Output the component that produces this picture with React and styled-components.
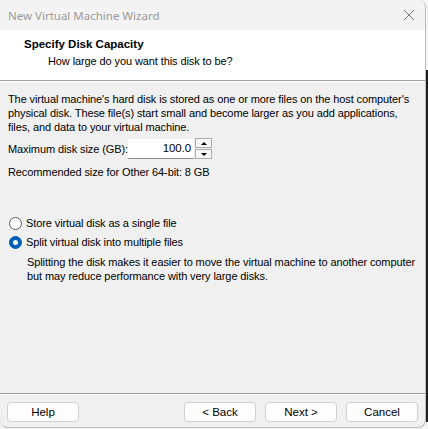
import styled, { createGlobalStyle } from "styled-components"

const GlobalStyle = createGlobalStyle`
  html, body {
    margin: 0;
    padding: 0;
    background: #f4f4f4;
  }
  body {
    font-family: "Liberation Sans", Arial, sans-serif;
    font-size: 11px;
    letter-spacing: -0.1px;
    color: #000;
  }
`

const Desktop = styled.div`
  display: flex;
  width: 428px;
  height: 429px;
  overflow: hidden;
`

const Window = styled.div`
  width: 425px;
  height: 427px;
  display: flex;
  flex-direction: column;
  background: #f0f0f0;
  border-right: 1px solid #bcbcbc;
  border-bottom: 1px solid #bcbcbc;
  border-radius: 0 8px 8px 8px;
  overflow: hidden;
`

const Backdrop = styled.div`
  width: 2px;
  display: flex;
  flex-direction: column;
`

const DarkEdge = styled.div`
  margin-top: 70px;
  height: 352px;
  background: #1f1f1f;
`

const TitleBar = styled.div`
  height: 30px;
  flex-shrink: 0;
  display: flex;
  align-items: center;
  justify-content: space-between;
  padding: 0 10px 0 8px;
  background: #f3f3f3;
  font-family: "Noto Sans", "Open Sans", sans-serif;
  font-size: 11.5px;
  letter-spacing: 0;
  color: #9b9b9b;
`

const CloseIcon = styled.svg`
  width: 12px;
  height: 12px;
`

const Header = styled.div`
  height: 51px;
  flex-shrink: 0;
  background: #fff;
  border-bottom: 1px solid #a0a0a0;
  box-shadow: 0 1px 0 #ffffff;
  padding: 7px 0 0 24px;
  box-sizing: border-box;
  display: flex;
  flex-direction: column;
  gap: 3px;
`

const HeaderTitle = styled.div`
  font-weight: bold;
  font-size: 11.5px;
  letter-spacing: 0;
  line-height: 14px;
`

const HeaderSub = styled.div`
  padding-left: 24px;
  line-height: 14px;
`

const Body = styled.div`
  flex: 1;
  padding: 11px 8px 0 8px;
  display: flex;
  flex-direction: column;
`

const Paragraph = styled.div`
  line-height: 14px;
  white-space: nowrap;
`

const SizeRow = styled.div`
  display: flex;
  align-items: center;
  margin-top: 4px;
  height: 21px;
`

const SizeLabel = styled.span`
  width: 120px;
  flex-shrink: 0;
  white-space: nowrap;
`

const NumberBox = styled.div`
  width: 66px;
  height: 20px;
  box-sizing: border-box;
  background: #fff;
  border-bottom: 1px solid #8a8a8a;
  display: flex;
  align-items: center;
  justify-content: flex-end;
  padding-right: 3px;
  font-size: 11.5px;
`

const Spinner = styled.div`
  width: 17px;
  height: 21px;
  margin-left: 1px;
  display: flex;
  flex-direction: column;
  gap: 1px;
`

const SpinButton = styled.div`
  flex: 1;
  box-sizing: border-box;
  border: 1px solid #acacac;
  background: #f6f6f6;
  display: flex;
  align-items: center;
  justify-content: center;
`

const Arrow = styled.div`
  width: 0;
  height: 0;
  border-left: 3px solid transparent;
  border-right: 3px solid transparent;
  ${props => props.up
    ? "border-bottom: 3px solid #000;"
    : "border-top: 3px solid #000;"}
`

const Note = styled.div`
  margin-top: 6px;
  line-height: 14px;
`

const RadioGroup = styled.div`
  margin-top: 37px;
  display: flex;
  flex-direction: column;
  gap: 5px;
`

const RadioRow = styled.label`
  display: flex;
  align-items: center;
  gap: 4px;
  height: 14px;
  margin-left: 1px;
`

const RadioDot = styled.span`
  width: 13px;
  height: 13px;
  box-sizing: border-box;
  border-radius: 50%;
  display: flex;
  align-items: center;
  justify-content: center;
  border: 1px solid ${props => props.checked ? "#005fb8" : "#5c5c5c"};
  background: ${props => props.checked ? "#005fb8" : "#fff"};
  &::after {
    content: "";
    width: 5px;
    height: 5px;
    border-radius: 50%;
    background: #fff;
    display: ${props => props.checked ? "block" : "none"};
  }
`

const Hint = styled.div`
  margin-top: 6px;
  padding-left: 19px;
  line-height: 14px;
  white-space: nowrap;
`

const Footer = styled.div`
  flex-shrink: 0;
  height: 34px;
  border-top: 1px solid #a0a0a0;
  box-shadow: inset 0 1px 0 #ffffff;
  display: flex;
  align-items: flex-start;
  padding: 8px 0 0 7px;
  box-sizing: border-box;
`

const Spacer = styled.div`
  flex: 1;
`

const NavGroup = styled.div`
  display: flex;
  gap: 9px;
  padding-right: 7px;
`

const Button = styled.button`
  width: 72px;
  height: 20px;
  box-sizing: border-box;
  border: 1px solid #d0d0d0;
  border-radius: 4px;
  background: #fdfdfd;
  font-family: "Liberation Sans", Arial, sans-serif;
  font-size: 11.5px;
  color: #000;
  padding: 0;
`

function Radio({ checked, children }) {
  return (
    <RadioRow>
      <RadioDot checked={checked} />
      <span>{children}</span>
    </RadioRow>
  )
}

export default function App() {
  return (
    <Desktop>
      <GlobalStyle />
      <Window>
        <TitleBar>
          <span>New Virtual Machine Wizard</span>
          <CloseIcon viewBox="0 0 12 12">
            <path d="M1 1 L11 11 M11 1 L1 11" stroke="#7a7a7a" strokeWidth="1" fill="none" />
          </CloseIcon>
        </TitleBar>
        <Header>
          <HeaderTitle>Specify Disk Capacity</HeaderTitle>
          <HeaderSub>How large do you want this disk to be?</HeaderSub>
        </Header>
        <Body>
          <Paragraph>
            The virtual machine's hard disk is stored as one or more files on the host computer's<br />
            physical disk. These file(s) start small and become larger as you add applications,<br />
            files, and data to your virtual machine.
          </Paragraph>
          <SizeRow>
            <SizeLabel>Maximum disk size (GB):</SizeLabel>
            <NumberBox>100.0</NumberBox>
            <Spinner>
              <SpinButton><Arrow up /></SpinButton>
              <SpinButton><Arrow /></SpinButton>
            </Spinner>
          </SizeRow>
          <Note>Recommended size for Other 64-bit: 8 GB</Note>
          <RadioGroup>
            <Radio>Store virtual disk as a single file</Radio>
            <Radio checked>Split virtual disk into multiple files</Radio>
          </RadioGroup>
          <Hint>
            Splitting the disk makes it easier to move the virtual machine to another computer<br />
            but may reduce performance with very large disks.
          </Hint>
        </Body>
        <Footer>
          <Button>Help</Button>
          <Spacer />
          <NavGroup>
            <Button>&lt; Back</Button>
            <Button>Next &gt;</Button>
            <Button>Cancel</Button>
          </NavGroup>
        </Footer>
      </Window>
      <Backdrop>
        <DarkEdge />
      </Backdrop>
    </Desktop>
  )
}
